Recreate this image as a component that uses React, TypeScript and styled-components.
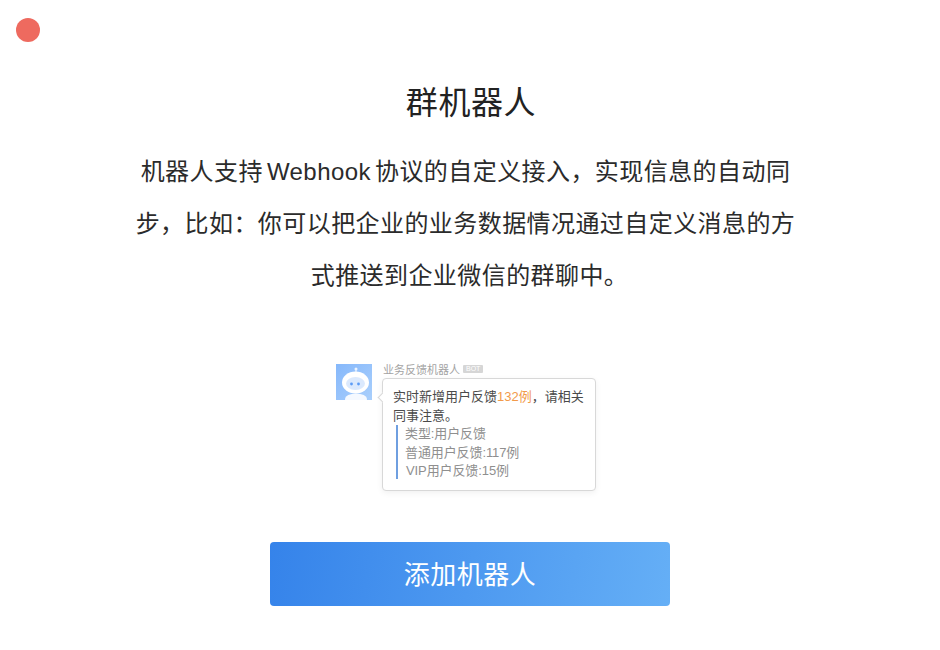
import React from "react";
import styled, { createGlobalStyle } from "styled-components";

const GlobalStyle = createGlobalStyle`
  html, body {
    margin: 0;
    padding: 0;
    background: #fff;
    font-family: "Liberation Sans", "Noto Sans CJK SC", sans-serif;
  }
`;

function RobotAvatar() {
  return (
    <AvatarBox viewBox="0 0 36 36">
      <defs>
        <linearGradient id="avatarBg" x1="0" y1="0" x2="1" y2="1">
          <stop offset="0" stopColor="#86b8fb" />
          <stop offset="1" stopColor="#a9cffc" />
        </linearGradient>
      </defs>
      <rect width="36" height="36" fill="url(#avatarBg)" />
      <circle cx="20" cy="5" r="1.5" fill="#eef5ff" />
      <rect x="19.5" y="5" width="1" height="4" fill="#eef5ff" />
      <ellipse cx="20" cy="35" rx="11" ry="5.5" fill="#f5f9ff" />
      <ellipse cx="19.5" cy="18.5" rx="13.5" ry="11" fill="#fff" />
      <ellipse cx="19.5" cy="19.5" rx="9.5" ry="6.5" fill="#dbe9fd" />
      <circle cx="15.5" cy="20" r="1.4" fill="#5b9bf6" />
      <circle cx="22.5" cy="20" r="1.4" fill="#5b9bf6" />
    </AvatarBox>
  );
}

export default function App() {
  return (
    <>
      <GlobalStyle />
      <Page>
        <CloseDot />
        <Title>群机器人</Title>
        <Intro>
          <IntroLine $shifted>机器人支持 Webhook 协议的自定义接入，实现信息的自动同</IntroLine>
          <IntroLine $shifted>步，比如：你可以把企业的业务数据情况通过自定义消息的方</IntroLine>
          <IntroLine>式推送到企业微信的群聊中。</IntroLine>
        </Intro>
        <Preview>
          <RobotAvatar />
          <MessageColumn>
            <SenderRow>
              业务反馈机器人<BotTag>BOT</BotTag>
            </SenderRow>
            <Bubble>
              <MainText>
                <span>实时新增用户反馈</span>
                <Highlight>132例</Highlight>
                <span>，请相关</span>
              </MainText>
              <MainText>同事注意。</MainText>
              <Quote>
                <QuoteLine>类型:用户反馈</QuoteLine>
                <QuoteLine>普通用户反馈:117例</QuoteLine>
                <QuoteLine $indent>VIP用户反馈:15例</QuoteLine>
              </Quote>
            </Bubble>
          </MessageColumn>
        </Preview>
        <AddButton>添加机器人</AddButton>
      </Page>
    </>
  );
}

const Page = styled.div`
  position: relative;
  width: 940px;
  height: 650px;
  box-sizing: border-box;
  padding-top: 82px;
  display: flex;
  flex-direction: column;
  align-items: center;
  overflow: hidden;
`;

const CloseDot = styled.div`
  position: absolute;
  left: 16px;
  top: 18px;
  width: 24px;
  height: 24px;
  border-radius: 50%;
  background: #ee6a5f;
`;

const Title = styled.h1`
  margin: 0;
  padding-left: 2px;
  font-size: 32px;
  line-height: 42px;
  font-weight: 400;
  letter-spacing: 0.6px;
  color: #222;
`;

const Intro = styled.div`
  margin: 22px 0 0;
  width: 680px;
  font-size: 24px;
  line-height: 52px;
  letter-spacing: 0.43px;
  word-spacing: -3px;
  color: #2b2b2b;
  text-align: center;
`;

const IntroLine = styled.div<{ $shifted?: boolean }>`
  white-space: nowrap;
  padding-right: ${(props) => (props.$shifted ? "9px" : "1px")};
`;

const Preview = styled.div`
  margin-top: 61px;
  width: 268px;
  display: flex;
  align-items: flex-start;
  gap: 10px;
`;

const AvatarBox = styled.svg`
  width: 36px;
  height: 36px;
  flex: none;
  margin-top: 1px;
`;

const MessageColumn = styled.div`
  flex: 1;
  display: flex;
  flex-direction: column;
`;

const SenderRow = styled.div`
  box-sizing: border-box;
  height: 15px;
  padding: 0 0 3px 1px;
  display: flex;
  align-items: center;
  gap: 3px;
  font-size: 11px;
  color: #a3a3a3;
`;

const BotTag = styled.span`
  padding: 0 3px;
  height: 8px;
  line-height: 8px;
  font-size: 7px;
  color: #fff;
  background: #d6d6d6;
  border-radius: 1px;
`;

const Bubble = styled.div`
  position: relative;
  box-sizing: border-box;
  width: 214px;
  height: 113px;
  padding: 9px 10px;
  background: #fff;
  border: 1px solid #d8d8d8;
  border-radius: 4px;
  box-shadow: 0 2px 6px rgba(0, 0, 0, 0.06);

  &::before {
    content: "";
    position: absolute;
    left: -4px;
    top: 15px;
    width: 6px;
    height: 6px;
    background: #fff;
    border-left: 1px solid #d8d8d8;
    border-bottom: 1px solid #d8d8d8;
    transform: rotate(45deg);
  }
`;

const MainText = styled.div`
  font-size: 13px;
  line-height: 18.5px;
  color: #4a4a4a;
  white-space: nowrap;
`;

const Highlight = styled.span`
  color: #f29a4a;
`;

const Quote = styled.div`
  margin: 0 0 0 3px;
  padding-left: 7px;
  height: 54px;
  border-left: 2px solid #6f9fe0;
`;

const QuoteLine = styled.div<{ $indent?: boolean }>`
  font-size: 13px;
  line-height: 18.5px;
  letter-spacing: -0.1px;
  color: #8f8f8f;
  padding-left: ${(props) => (props.$indent ? "1px" : "0")};
`;

const AddButton = styled.button`
  margin-top: 51px;
  width: 400px;
  height: 64px;
  padding: 0 0 3px;
  border: none;
  border-radius: 4px;
  background: linear-gradient(100deg, #3583ea 0%, #65aff6 100%);
  color: #fff;
  font-family: inherit;
  font-size: 26px;
  font-weight: 400;
  letter-spacing: 0.5px;
`;
